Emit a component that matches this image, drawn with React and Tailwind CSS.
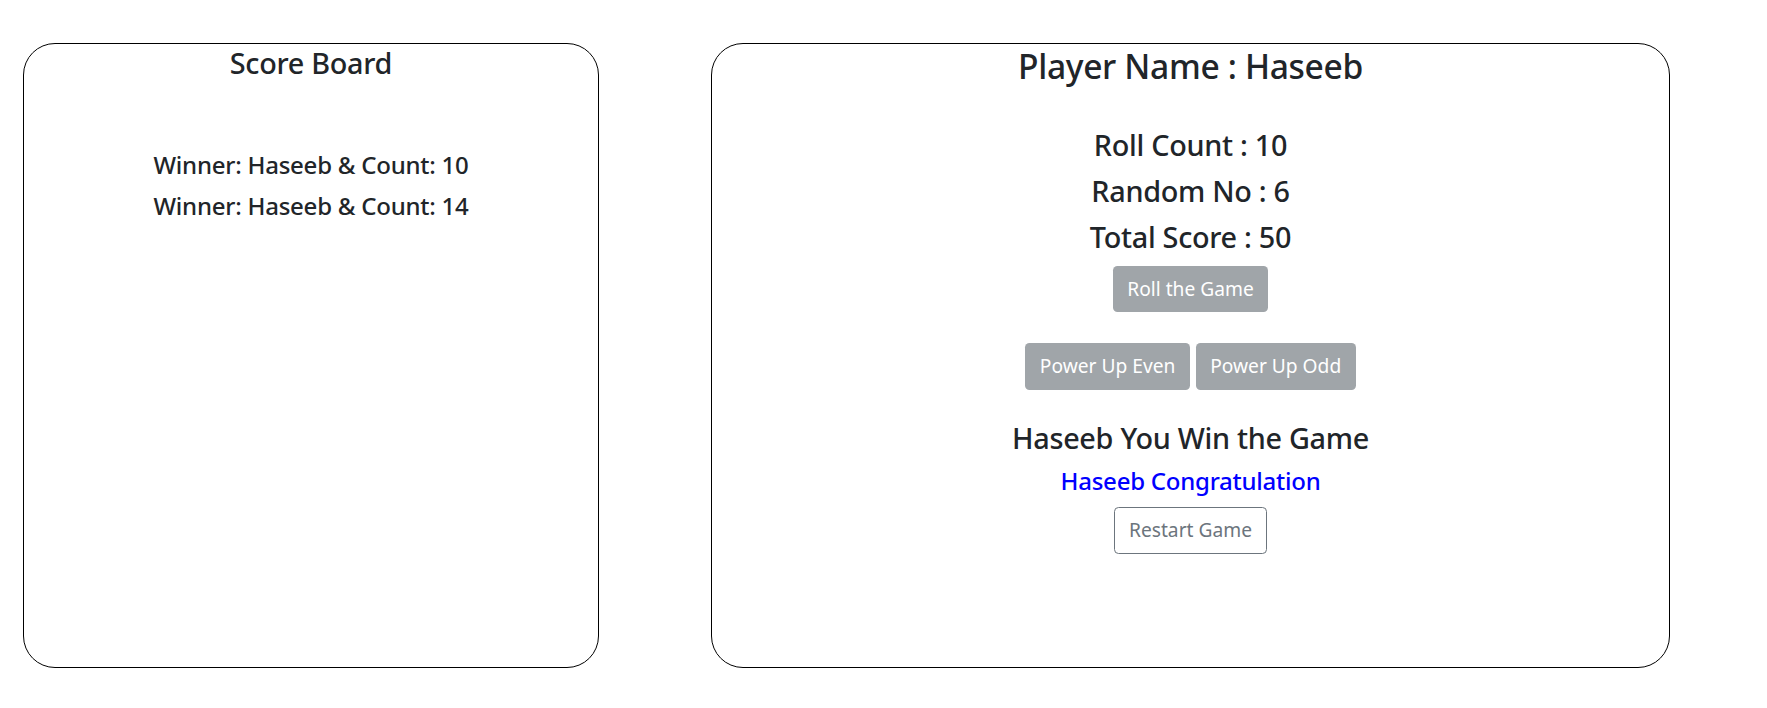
import React from 'react'

export default function App() {
  const winners = [
    { name: 'Haseeb', count: 10 },
    { name: 'Haseeb', count: 14 },
  ]

  return (
    <div className="min-h-screen bg-white text-[#212529] font-['Noto_Sans',sans-serif]">
      <div className="flex gap-[112px] pl-[23px] pt-[43px]">
        {/* Score board */}
        <div className="w-[576px] h-[625px] rounded-[32px] border border-black pt-[2px] text-center">
          <h4 className="text-[28.8px] leading-[1.2] font-medium tracking-[-0.01em] mb-[9.6px]">Score Board</h4>
          <div className="pt-[61px]">
            {winners.map((w, i) => (
              <h5 key={i} className="text-[24px] leading-[1.2] font-medium tracking-[-0.01em] mb-[12px]">
                Winner: {w.name} &amp; Count: {w.count}
              </h5>
            ))}
          </div>
        </div>

        {/* Game */}
        <div className="w-[959px] h-[625px] rounded-[32px] border border-black pt-[2px] text-center">
          <h3 className="text-[33.6px] leading-[1.2] font-medium tracking-[-0.01em] mb-[9.6px]">Player Name : Haseeb</h3>
          <div className="pt-[32px]">
            <h4 className="text-[28.8px] leading-[1.2] font-medium tracking-[-0.01em] mb-[11.5px]">Roll Count : 10</h4>
            <h4 className="text-[28.8px] leading-[1.2] font-medium tracking-[-0.01em] mb-[11.5px]">Random No : 6</h4>
            <h4 className="text-[28.8px] leading-[1.2] font-medium tracking-[-0.01em] mb-[11.5px]">Total Score : 50</h4>
          </div>
          <button
            disabled
            className="h-[46px] rounded-[4.5px] bg-[#a0a5a9] px-[14.4px] text-[19.2px] text-white"
          >
            Roll the Game
          </button>
          <div className="mt-[30.5px] flex justify-center gap-[6px]">
            <button disabled className="h-[47px] rounded-[4.5px] bg-[#a0a5a9] px-[14.4px] text-[19.2px] text-white">
              Power Up Even
            </button>
            <button disabled className="h-[47px] rounded-[4.5px] bg-[#a0a5a9] px-[14.4px] text-[19.2px] text-white">
              Power Up Odd
            </button>
          </div>
          <h4 className="mt-[31px] text-[28.8px] leading-[1.2] font-medium tracking-[-0.01em] mb-[12px]">Haseeb You Win the Game</h4>
          <h5 className="text-[24px] leading-[1.2] font-medium tracking-[-0.01em] text-[#0000ff] mb-[11px]">Haseeb Congratulation</h5>
          <button className="h-[47px] rounded-[4.5px] border border-[#6c757d] bg-white px-[14.4px] text-[19.2px] text-[#6c757d]">
            Restart Game
          </button>
        </div>
      </div>
    </div>
  )
}
